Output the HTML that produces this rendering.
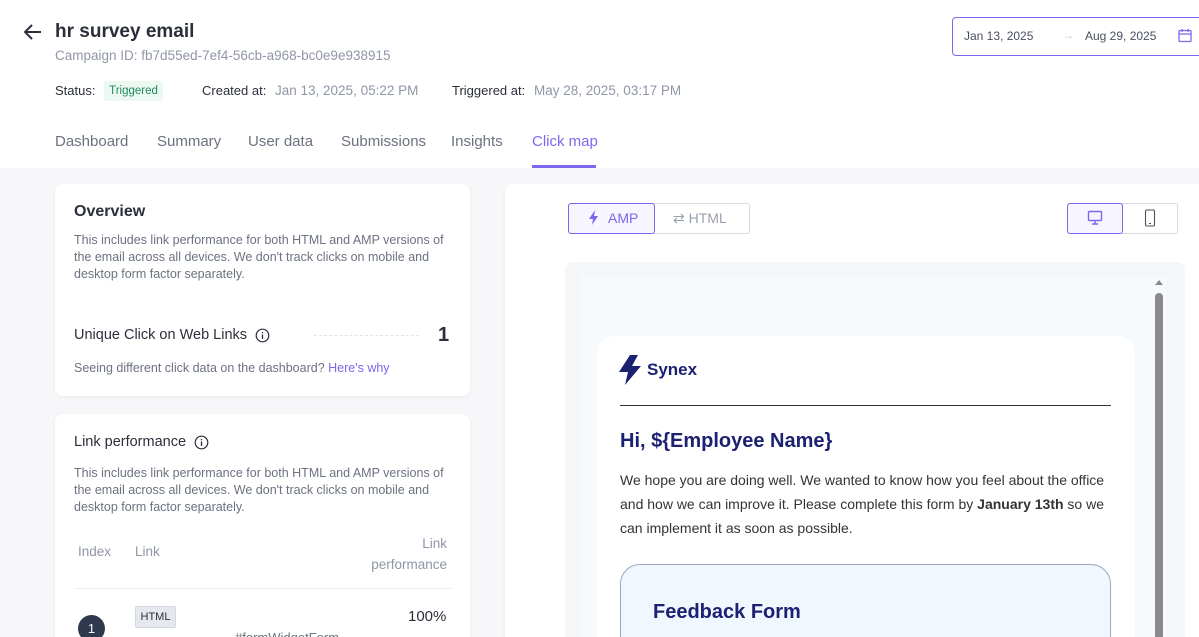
<!DOCTYPE html>
<html style="width:1199px;height:637px;overflow:hidden"><head><style>
*{margin:0;padding:0;box-sizing:border-box}
body{width:1199px;height:637px;overflow:hidden;background:#f7f7fa;font-family:"Liberation Sans",sans-serif;position:relative;color:#2b2f3a}
.a{position:absolute}
.hdr{left:0;top:0;width:1199px;height:168px;background:#fff}
.card{background:#fff;border-radius:8px;box-shadow:0 1px 4px rgba(0,0,0,.06)}
.mut{color:#8f96a6}
.sm{font-size:12.5px;line-height:17px;color:#6b7280}
</style></head><body>
<div class="a hdr"></div>
<svg class="a" style="left:24px;top:24px" width="18" height="16" viewBox="0 0 18 16"><path d="M17 8H2M8 1L1 8l7 7" fill="none" stroke="#2b2f3a" stroke-width="2"/></svg>
<div class="a" style="left:55px;top:21px;font-size:19px;font-weight:bold;color:#2b2f3a">hr survey email</div>
<div class="a mut" style="left:55px;top:48px;font-size:13.5px">Campaign ID: fb7d55ed-7ef4-56cb-a968-bc0e9e938915</div>
<div class="a" style="left:55px;top:83px;font-size:13px">Status:</div>
<div class="a" style="left:104px;top:81px;width:59px;height:20px;background:#ecf8f2;color:#1f8a5c;font-size:11.5px;line-height:20px;text-align:center;border-radius:2px">Triggered</div>
<div class="a" style="left:202px;top:83px;font-size:13px">Created at:</div>
<div class="a mut" style="left:275px;top:83px;font-size:13.5px">Jan 13, 2025, 05:22 PM</div>
<div class="a" style="left:452px;top:83px;font-size:13px">Triggered at:</div>
<div class="a mut" style="left:534px;top:83px;font-size:13.5px">May 28, 2025, 03:17 PM</div>
<div class="a" style="left:55px;top:133px;font-size:15px;color:#6b7280">Dashboard</div>
<div class="a" style="left:157px;top:133px;font-size:15px;color:#6b7280">Summary</div>
<div class="a" style="left:248px;top:133px;font-size:15px;color:#6b7280">User data</div>
<div class="a" style="left:341px;top:133px;font-size:15px;color:#6b7280">Submissions</div>
<div class="a" style="left:451px;top:133px;font-size:15px;color:#6b7280">Insights</div>
<div class="a" style="left:532px;top:133px;font-size:15px;color:#7b68ee">Click map</div>
<div class="a" style="left:532px;top:165px;width:64px;height:3px;background:#7b68ee"></div>
<div class="a" style="left:952px;top:17px;width:260px;height:39px;border:1px solid #7b68ee;border-radius:4px;background:#fff"></div>
<div class="a" style="left:964px;top:29px;font-size:12px;color:#4b5060">Jan 13, 2025</div>
<div class="a" style="left:1062px;top:28px;font-size:12px;color:#ccc">→</div>
<div class="a" style="left:1085px;top:29px;font-size:12px;color:#4b5060">Aug 29, 2025</div>
<svg class="a" style="left:1178px;top:28px" width="14" height="15" viewBox="0 0 14 15"><rect x="1" y="2.5" width="12" height="11" rx="1" fill="none" stroke="#7b68ee" stroke-width="1.3"/><path d="M1 6h12M4 1v3M10 1v3" stroke="#7b68ee" stroke-width="1.3"/></svg>

<div class="a card" style="left:55px;top:184px;width:415px;height:212px"></div>
<div class="a" style="left:74px;top:203px;font-size:16px;font-weight:bold">Overview</div>
<div class="a sm" style="left:74px;top:232px;width:380px">This includes link performance for both HTML and AMP versions of the email across all devices. We don't track clicks on mobile and desktop form factor separately.</div>
<div class="a" style="left:74px;top:327px;font-size:14.5px">Unique Click on Web Links</div>
<svg class="a" style="left:255px;top:328px" width="15" height="15"><circle cx="7.5" cy="7.5" r="6.3" fill="none" stroke="#2b2f3a" stroke-width="1.2"/><path d="M7.5 6.5v4.5M7.5 4v1.3" stroke="#2b2f3a" stroke-width="1.3"/></svg>
<div class="a" style="left:314px;top:335px;width:105px;border-top:1px dashed #e2e4ea"></div>
<div class="a" style="left:438px;top:324px;font-size:20px;font-weight:bold">1</div>
<div class="a sm" style="left:74px;top:360px">Seeing different click data on the dashboard? <span style="color:#7b68ee">Here's why</span></div>

<div class="a card" style="left:55px;top:414px;width:415px;height:240px"></div>
<div class="a" style="left:74px;top:434px;font-size:14.5px">Link performance</div>
<svg class="a" style="left:194px;top:435px" width="15" height="15"><circle cx="7.5" cy="7.5" r="6.3" fill="none" stroke="#2b2f3a" stroke-width="1.2"/><path d="M7.5 6.5v4.5M7.5 4v1.3" stroke="#2b2f3a" stroke-width="1.3"/></svg>
<div class="a sm" style="left:74px;top:465px;width:380px">This includes link performance for both HTML and AMP versions of the email across all devices. We don't track clicks on mobile and desktop form factor separately.</div>
<div class="a mut" style="left:78px;top:544px;font-size:13.5px">Index</div>
<div class="a mut" style="left:135px;top:544px;font-size:13.5px">Link</div>
<div class="a mut" style="left:360px;top:533px;width:87px;text-align:right;font-size:13.5px;line-height:21px">Link<br>performance</div>
<div class="a" style="left:74px;top:588px;width:378px;border-top:1px solid #eceef2"></div>
<div class="a" style="left:135px;top:606px;width:41px;height:22px;background:#e5e8ef;border:1px solid #d3d7e0;border-radius:2px;font-size:11px;line-height:20px;text-align:center">HTML</div>
<div class="a" style="left:408px;top:608px;font-size:15px">100%</div>
<div class="a" style="left:78px;top:615px;width:27px;height:27px;border-radius:50%;background:#2f3a4f;color:#fff;font-size:13px;text-align:center;line-height:27px">1</div>
<div class="a" style="left:235px;top:630px;font-size:13px;color:#6b7280">#formWidgetForm</div>

<div class="a card" style="left:505px;top:184px;width:710px;height:470px"></div>
<div class="a" style="left:568px;top:203px;width:182px;height:31px;border:1px solid #d8dae0;border-radius:3px"></div>
<div class="a" style="left:568px;top:203px;width:87px;height:31px;border:1px solid #7b68ee;border-radius:3px;background:#f7f5ff"></div>
<svg class="a" style="left:589px;top:210px" width="10" height="15" viewBox="0 0 10 15"><path d="M6 0L0 9h4l-1 6 6-9H5z" fill="#7b68ee"/></svg>
<div class="a" style="left:608px;top:210px;font-size:14px;color:#7b68ee">AMP</div>
<div class="a" style="left:673px;top:210px;font-size:14px;color:#9aa0ad">⇄ HTML</div>
<div class="a" style="left:1067px;top:203px;width:111px;height:31px;border:1px solid #d8dae0;border-radius:3px"></div>
<div class="a" style="left:1067px;top:203px;width:56px;height:31px;border:1px solid #7b68ee;border-radius:3px;background:#f7f5ff"></div>
<svg class="a" style="left:1087px;top:210px" width="16" height="16"><rect x="1.5" y="1.5" width="13" height="9" rx="1" fill="none" stroke="#7b68ee" stroke-width="1.4"/><path d="M8 11v2.5M5 14h6" stroke="#7b68ee" stroke-width="1.4"/></svg>
<svg class="a" style="left:1144px;top:209px" width="12" height="18"><rect x="1.5" y="1" width="9" height="16" rx="1.5" fill="none" stroke="#4b5060" stroke-width="1.1"/><path d="M5 14.5h2" stroke="#4b5060"/></svg>

<div class="a" style="left:565px;top:262px;width:620px;height:400px;background:#f5f6f8;border-radius:8px"></div>
<div class="a" style="left:580px;top:276px;width:587px;height:380px;background:#f6fafd"></div>
<div class="a" style="left:1155px;top:293px;width:8px;height:350px;background:#8a8a8a;border-radius:4px"></div>
<div class="a" style="left:1155px;top:280px;width:0;height:0;border-left:4px solid transparent;border-right:4px solid transparent;border-bottom:5px solid #8a8a8a"></div>
<div class="a" style="left:597px;top:336px;width:538px;height:320px;background:#fff;border-radius:18px"></div>
<svg class="a" style="left:619px;top:355px" width="24" height="30" viewBox="0 0 24 30"><path d="M11 0L0 17h9L6 30 22 11h-9l6-11z" fill="#1c2172"/></svg>
<div class="a" style="left:647px;top:360px;font-size:17px;font-weight:bold;color:#1c2172">Synex</div>
<div class="a" style="left:620px;top:405px;width:491px;border-top:1px solid #333"></div>
<div class="a" style="left:620px;top:430px;font-size:20px;font-weight:bold;color:#1c2172">Hi, ${Employee Name}</div>
<div class="a" style="left:620px;top:468px;width:495px;font-size:14px;line-height:24px;color:#333">We hope you are doing well. We wanted to know how you feel about the office and how we can improve it. Please complete this form by <b>January 13th</b> so we can implement it as soon as possible.</div>
<div class="a" style="left:620px;top:564px;width:491px;height:100px;background:#f0f7ff;border:1px solid #9aa6c0;border-radius:20px"></div>
<div class="a" style="left:653px;top:601px;font-size:20px;font-weight:bold;color:#1c2172">Feedback Form</div>
</body></html>
